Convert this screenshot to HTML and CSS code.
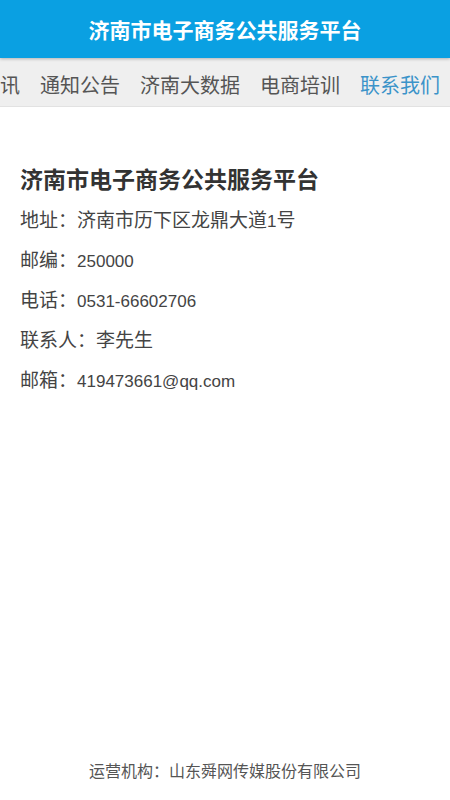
FILE: index.html
```html
<!DOCTYPE html>
<html lang="zh-CN">
<head>
<meta charset="utf-8">
<title>联系我们</title>
<link rel="stylesheet" href="styles.css">
</head>
<body>
<div class="page">
  <header class="topbar">济南市电子商务公共服务平台</header>
  <nav class="nav">
    <div class="nav-track">
      <span class="nav-item">电商资讯</span>
      <span class="nav-item">通知公告</span>
      <span class="nav-item">济南大数据</span>
      <span class="nav-item">电商培训</span>
      <span class="nav-item active">联系我们</span>
    </div>
  </nav>
  <main class="content">
    <h1 class="org">济南市电子商务公共服务平台</h1>
    <p class="line">地址<span class="colon">：</span>济南市历下区龙鼎大道<span class="latin">1</span>号</p>
    <p class="line">邮编<span class="colon">：</span><span class="latin">250000</span></p>
    <p class="line">电话<span class="colon">：</span><span class="latin">0531-66602706</span></p>
    <p class="line">联系人<span class="colon">：</span>李先生</p>
    <p class="line">邮箱<span class="colon">：</span><span class="latin">419473661@qq.com</span></p>
  </main>
  <footer class="footer">运营机构<span class="colon">：</span>山东舜网传媒股份有限公司</footer>
</div>
</body>
</html>
```
FILE: styles.css
```css
* { box-sizing: border-box; }
html, body { margin: 0; padding: 0; background: #fff; }
body {
  font-family: "Noto Sans CJK SC", "Noto Sans", sans-serif;
  color: #444;
}
.page {
  min-height: 800px;
  display: flex;
  flex-direction: column;
}
.topbar {
  height: 58px;
  background: #0aa0e2;
  color: #fff;
  font-size: 21px;
  font-weight: 700;
  display: flex;
  align-items: center;
  justify-content: center;
  position: relative;
  z-index: 2;
  box-shadow: 0 1px 3px rgba(0,0,0,0.25);
}
.nav {
  height: 49px;
  background: #efefef;
  overflow: hidden;
  border-bottom: 1px solid #e2e2e2;
  display: flex;
  align-items: center;
  padding-top: 5px;
}
.nav-track {
  display: flex;
  margin-left: -70px;
  white-space: nowrap;
}
.nav-item {
  padding: 0 10px;
  font-size: 20px;
  color: #555;
  line-height: 30px;
}
.nav-item.active { color: #3b93c9; }
.content {
  flex: 1;
  padding: 52px 20px 0;
}
.org {
  margin: 0 0 1px;
  font-size: 23px;
  font-weight: 700;
  color: #333;
  line-height: 39px;
}
.line {
  margin: 0;
  font-size: 19px;
  height: 40px;
  line-height: 40px;
  color: #444;
  white-space: nowrap;
}
.colon {
  font-family: "Noto Sans CJK TC", "Noto Sans CJK SC", sans-serif;
  line-height: 1;
}
.latin {
  font-family: "Liberation Sans", Arial, sans-serif;
  font-size: 17px;
  line-height: 1;
}
.footer {
  text-align: center;
  font-size: 16px;
  color: #555;
  line-height: 40px;
  padding-bottom: 10px;
}
```
